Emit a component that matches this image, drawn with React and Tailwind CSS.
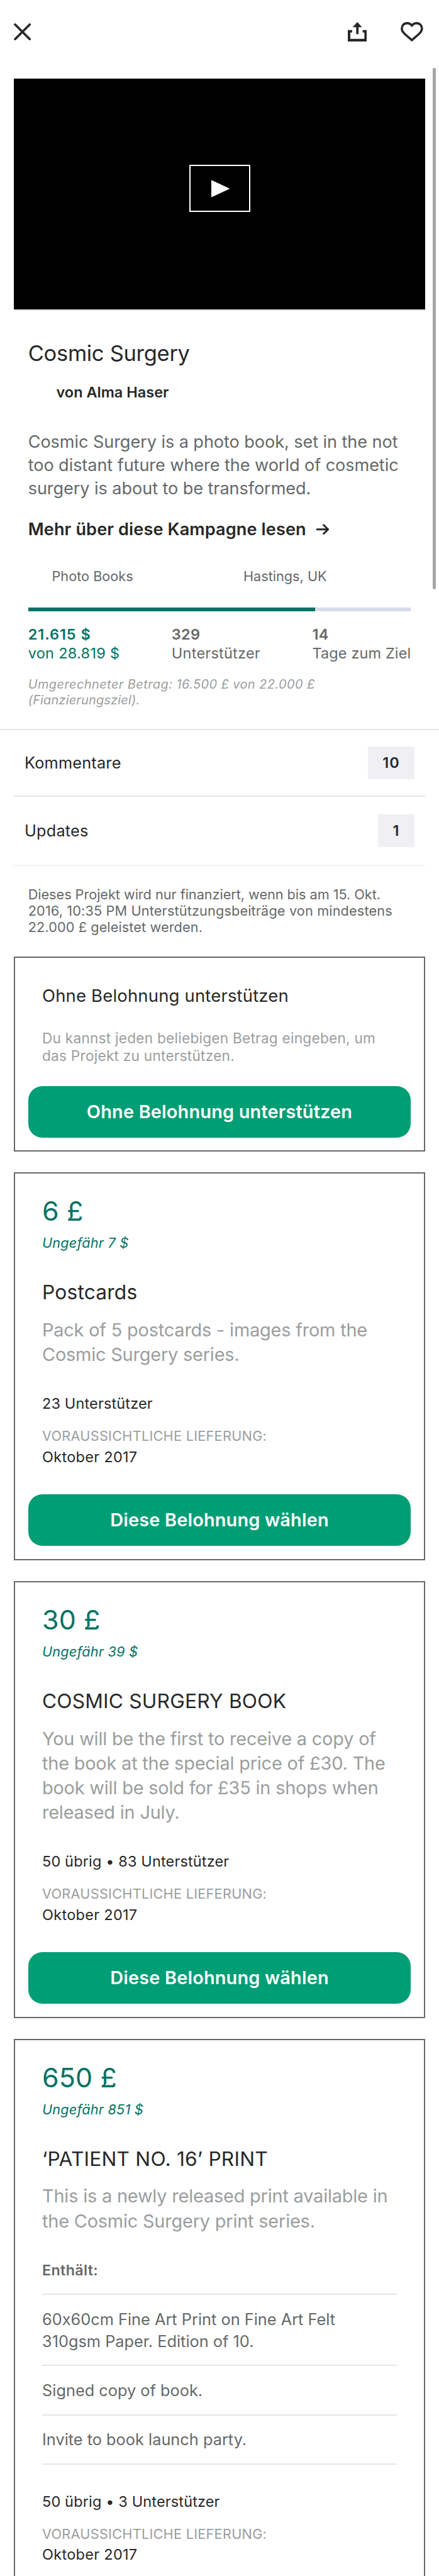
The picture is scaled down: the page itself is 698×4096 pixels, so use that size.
function CloseIcon() {
  return (
    <svg className="h-[27.3px] w-[27.3px]" viewBox="0 0 29.3 29.3" fill="none" stroke="#282828" strokeWidth="4" strokeLinecap="round">
      <path d="M2.2 2.2 27.1 27.1M27.1 2.2 2.2 27.1" />
    </svg>
  );
}

function ShareIcon() {
  return (
    <svg className="h-[31px] w-[30.4px]" viewBox="101 112 98 100" fill="#282828">
      <path d="M101 153H123V166H114V198H186V166H177V153H199V212H101Z" />
      <path d="M150 112 174 139H156V174H144V139H126Z" />
    </svg>
  );
}

function HeartIcon() {
  return (
    <svg className="h-[31px] w-[35.7px]" viewBox="372 112 115 100" fill="none" stroke="#282828" strokeWidth="11.5" strokeLinejoin="round">
      <path d="M429.500 131C423 121 414 118 405 118C389 118 378 130 378 146C378 158 384 165 394 174L429.500 205L465 174C475 165 481 158 481 146C481 130 470 118 454 118C445 118 436 121 429.500 131Z" />
    </svg>
  );
}

function ArrowIcon() {
  return (
    <svg className="h-[17.600px] w-[20.500px]" viewBox="0 0 22 19" fill="none" stroke="#282828" strokeWidth="3.2">
      <path d="M0 9.500H20M11.600 1.100 20 9.500 11.600 17.900" />
    </svg>
  );
}

function Lines({ lines }) {
  return lines.map((line) => (
    <span key={line} className="block whitespace-nowrap">
      {line}
    </span>
  ));
}

function Row({ label, count, className, badge }) {
  return (
    <div className={`mx-[22.3px] flex items-center justify-between pr-[17px] pl-[16.700px] ${className}`}>
      <span className="text-[25.3px] tracking-[0.2px] text-[#282828]">{label}</span>
      <span className={`flex h-[52px] items-center justify-center bg-[#efeff4] text-[23.5px] font-semibold tracking-[1px] text-[#282828] ${badge}`}>
        {count}
      </span>
    </div>
  );
}

function Button({ children, className }) {
  return (
    <button className={`mx-[20.300px] flex h-[82px] items-center justify-center rounded-[22.3px] bg-[#009e74] text-[28.9px] leading-[36px] font-semibold tracking-[0.17px] whitespace-nowrap text-white ${className}`}>
      {children}
    </button>
  );
}

function Reward({ price, approx, title, description, items, backers, action }) {
  return (
    <section
      className={`mx-[22.3px] flex flex-col border-[#656969] ${action ? "mb-[33.5px] border-2 pb-[20.300px]" : "grow border-x-2 border-t-2"}`}
    >
      <div className="mx-[42.700px] flex flex-col">
        <p className="mt-[33.700px] text-[43px] leading-[50px] tracking-[0.1px] text-[#037362]">{price}</p>
        <p className="mt-[13px] text-[21.7px] leading-[27px] tracking-[0.18px] text-[#037362] italic">{approx}</p>
        <h2 className="mt-[44.8px] text-[31.7px] leading-[40px] tracking-[0.2px] text-[#282828]">{title}</h2>
        <p className="mt-[19.8px] text-[28.9px] leading-[39.1px] tracking-[-0.19px] text-[#9b9e9e]">
          <Lines lines={description} />
        </p>
        {items && (
          <div className="mt-[44px] text-[#656969]">
            <p className="pb-[22.3px] text-[23.2px] leading-[30px] font-semibold tracking-[0.4px]">Enthält:</p>
            <ul className="border-t-2 border-[#e6e6e6]">
              {items.map((item) => (
                <li key={item[0]} className="border-b-2 border-[#e6e6e6] pt-[20.8px] pb-[20.200px] text-[25.3px] leading-[35.2px] tracking-[0.02px] [font-feature-settings:'calt'_0]">
                  <Lines lines={item} />
                </li>
              ))}
            </ul>
          </div>
        )}
        <p className="mt-[44px] text-[23.5px] leading-[30px] tracking-[0.14px] text-[#282828]">{backers}</p>
        <p className="mt-[22px] text-[21.7px] leading-[28px] tracking-[0.26px] text-[#9b9e9e]">VORAUSSICHTLICHE LIEFERUNG:</p>
        <p className="mt-[4.8px] text-[23.5px] leading-[30px] tracking-[0.29px] text-[#282828]">Oktober 2017</p>
      </div>
      {action && <Button className="mt-[44.7px]">{action}</Button>}
    </section>
  );
}

const rewards = [
  {
    price: "6 £",
    approx: "Ungefähr 7 $",
    title: "Postcards",
    description: ["Pack of 5 postcards - images from the", "Cosmic Surgery series."],
    backers: "23 Unterstützer",
    action: "Diese Belohnung wählen",
  },
  {
    price: "30 £",
    approx: "Ungefähr 39 $",
    title: "COSMIC SURGERY BOOK",
    description: [
      "You will be the first to receive a copy of",
      "the book at the special price of £30. The",
      "book will be sold for £35 in shops when",
      "released in July.",
    ],
    backers: "50 übrig • 83 Unterstützer",
    action: "Diese Belohnung wählen",
  },
  {
    price: "650 £",
    approx: "Ungefähr 851 $",
    title: "‘PATIENT NO. 16’ PRINT",
    description: ["This is a newly released print available in", "the Cosmic Surgery print series."],
    items: [
      ["60x60cm Fine Art Print on Fine Art Felt", "310gsm Paper. Edition of 10."],
      ["Signed copy of book."],
      ["Invite to book launch party."],
    ],
    backers: "50 übrig • 3 Unterstützer",
  },
];

export default function App() {
  return (
    <main className="relative flex h-[4096px] w-[698px] flex-col overflow-hidden bg-white font-['Inter',sans-serif]">
      <header className="mb-[24.3px] flex h-[100.4px] shrink-0 items-center pl-[21.8px]">
        <CloseIcon />
        <div className="ml-[503.600px] flex items-center gap-[53.8px]">
          <ShareIcon />
          <HeartIcon />
        </div>
      </header>

      <div className="mx-[22.3px] flex h-[369.600px] shrink-0 justify-center border-b-2 border-[#e6e6e6] bg-black pt-[137.8px]">
        <div className="flex h-[74.5px] w-[97px] items-center justify-center border-2 border-white">
          <svg className="ml-[3px] h-[28px] w-[29.3px]" viewBox="0 0 30 28" fill="#fff">
            <path d="M0 0 30 14 0 28Z" />
          </svg>
        </div>
      </div>

      <div className="mx-[44.7px] pt-[47.2px]">
        <h1 className="text-[34.5px] leading-[42px] tracking-[-0.3px] text-[#282828]">Cosmic Surgery</h1>
        <p className="mt-[25.1px] ml-[44.8px] text-[23.5px] leading-[30px] font-semibold text-[#282828]">von Alma Haser</p>
        <p className="mt-[45px] text-[27.1px] leading-[37.240px] tracking-[-0.07px] text-[#656969]">
          <Lines
            lines={[
              "Cosmic Surgery is a photo book, set in the not",
              "too distant future where the world of cosmetic",
              "surgery is about to be transformed.",
            ]}
          />
        </p>
        <a className="mt-[28.6px] flex items-center gap-[16px] text-[27.1px] leading-[36px] font-semibold tracking-[0.11px] whitespace-nowrap text-[#282828]">
          Mehr über diese Kampagne lesen
          <ArrowIcon />
        </a>
        <div className="mt-[41.7px] grid grid-cols-2 pl-[37.8px] text-[21.7px] leading-[28px] text-[#656969]">
          <span>Photo Books</span>
          <span className="ml-[19px]">Hastings, UK</span>
        </div>
        <div className="mt-[36.7px] h-[5.6px] bg-[#d9dce6]">
          <div className="h-full w-3/4 bg-[#037362]" />
        </div>
        <div className="mt-[22.100px] flex justify-between text-[23.5px] leading-[29.8px] whitespace-nowrap text-[#656969]">
          <div className="text-[#037362]">
            <div className="font-semibold tracking-[0.95px]">21.615 $</div>
            <div className="tracking-[0.28px]">von 28.819 $</div>
          </div>
          <div>
            <div className="font-semibold tracking-[0.3px]">329</div>
            <div className="tracking-[0.24px]">Unterstützer</div>
          </div>
          <div>
            <div className="font-semibold tracking-[0.3px]">14</div>
            <div className="tracking-[0.12px]">Tage zum Ziel</div>
          </div>
        </div>
        <p className="mt-[22.7px] text-[19.9px] leading-[24.3px] text-[#9b9e9e] italic">
          <span className="block tracking-[0.46px] whitespace-nowrap">Umgerechneter Betrag: 16.500 £ von 22.000 £</span>
          <span className="block tracking-[0.2px]">(Fianzierungsziel).</span>
        </p>
      </div>

      <div className="mt-[34.1px] border-t-2 border-[#e6e6e6]">
        <Row label="Kommentare" count="10" className="h-[106px] border-b-2 border-[#e6e6e6]" badge="w-[73.5px]" />
        <Row label="Updates" count="1" className="h-[110px] border-b-2 border-[#f4f4f4]" badge="w-[57.5px]" />
      </div>

      <p className="mt-[32px] ml-[44.7px] text-[21.7px] leading-[26.1px] text-[#656969]">
        <span className="block tracking-[-0.04px] whitespace-nowrap">Dieses Projekt wird nur finanziert, wenn bis am 15. Okt.</span>
        <span className="block tracking-[0.14px] whitespace-nowrap">2016, 10:35 PM Unterstützungsbeiträge von mindestens</span>
        <span className="block tracking-[0.1px] whitespace-nowrap">22.000 £ geleistet werden.</span>
      </p>

      <section className="mx-[22.3px] mt-[33.8px] mb-[33.5px] flex h-[310px] shrink-0 flex-col border-2 border-[#656969]">
        <h2 className="mt-[43.2px] ml-[42.700px] text-[27.5px] leading-[34px] tracking-[0.16px] text-[#282828]">Ohne Belohnung unterstützen</h2>
        <p className="mt-[36.8px] ml-[42.700px] text-[22.6px] leading-[27.6px] tracking-[0.26px] text-[#9b9e9e]">
          <Lines lines={["Du kannst jeden beliebigen Betrag eingeben, um", "das Projekt zu unterstützen."]} />
        </p>
        <Button className="mt-[34.5px]">Ohne Belohnung unterstützen</Button>
      </section>

      {rewards.map((reward) => (
        <Reward key={reward.price} {...reward} />
      ))}

      <div className="absolute top-[108px] left-[688px] h-[828.5px] w-[4.6px] rounded-full bg-[#a6a6a6]" />
    </main>
  );
}
